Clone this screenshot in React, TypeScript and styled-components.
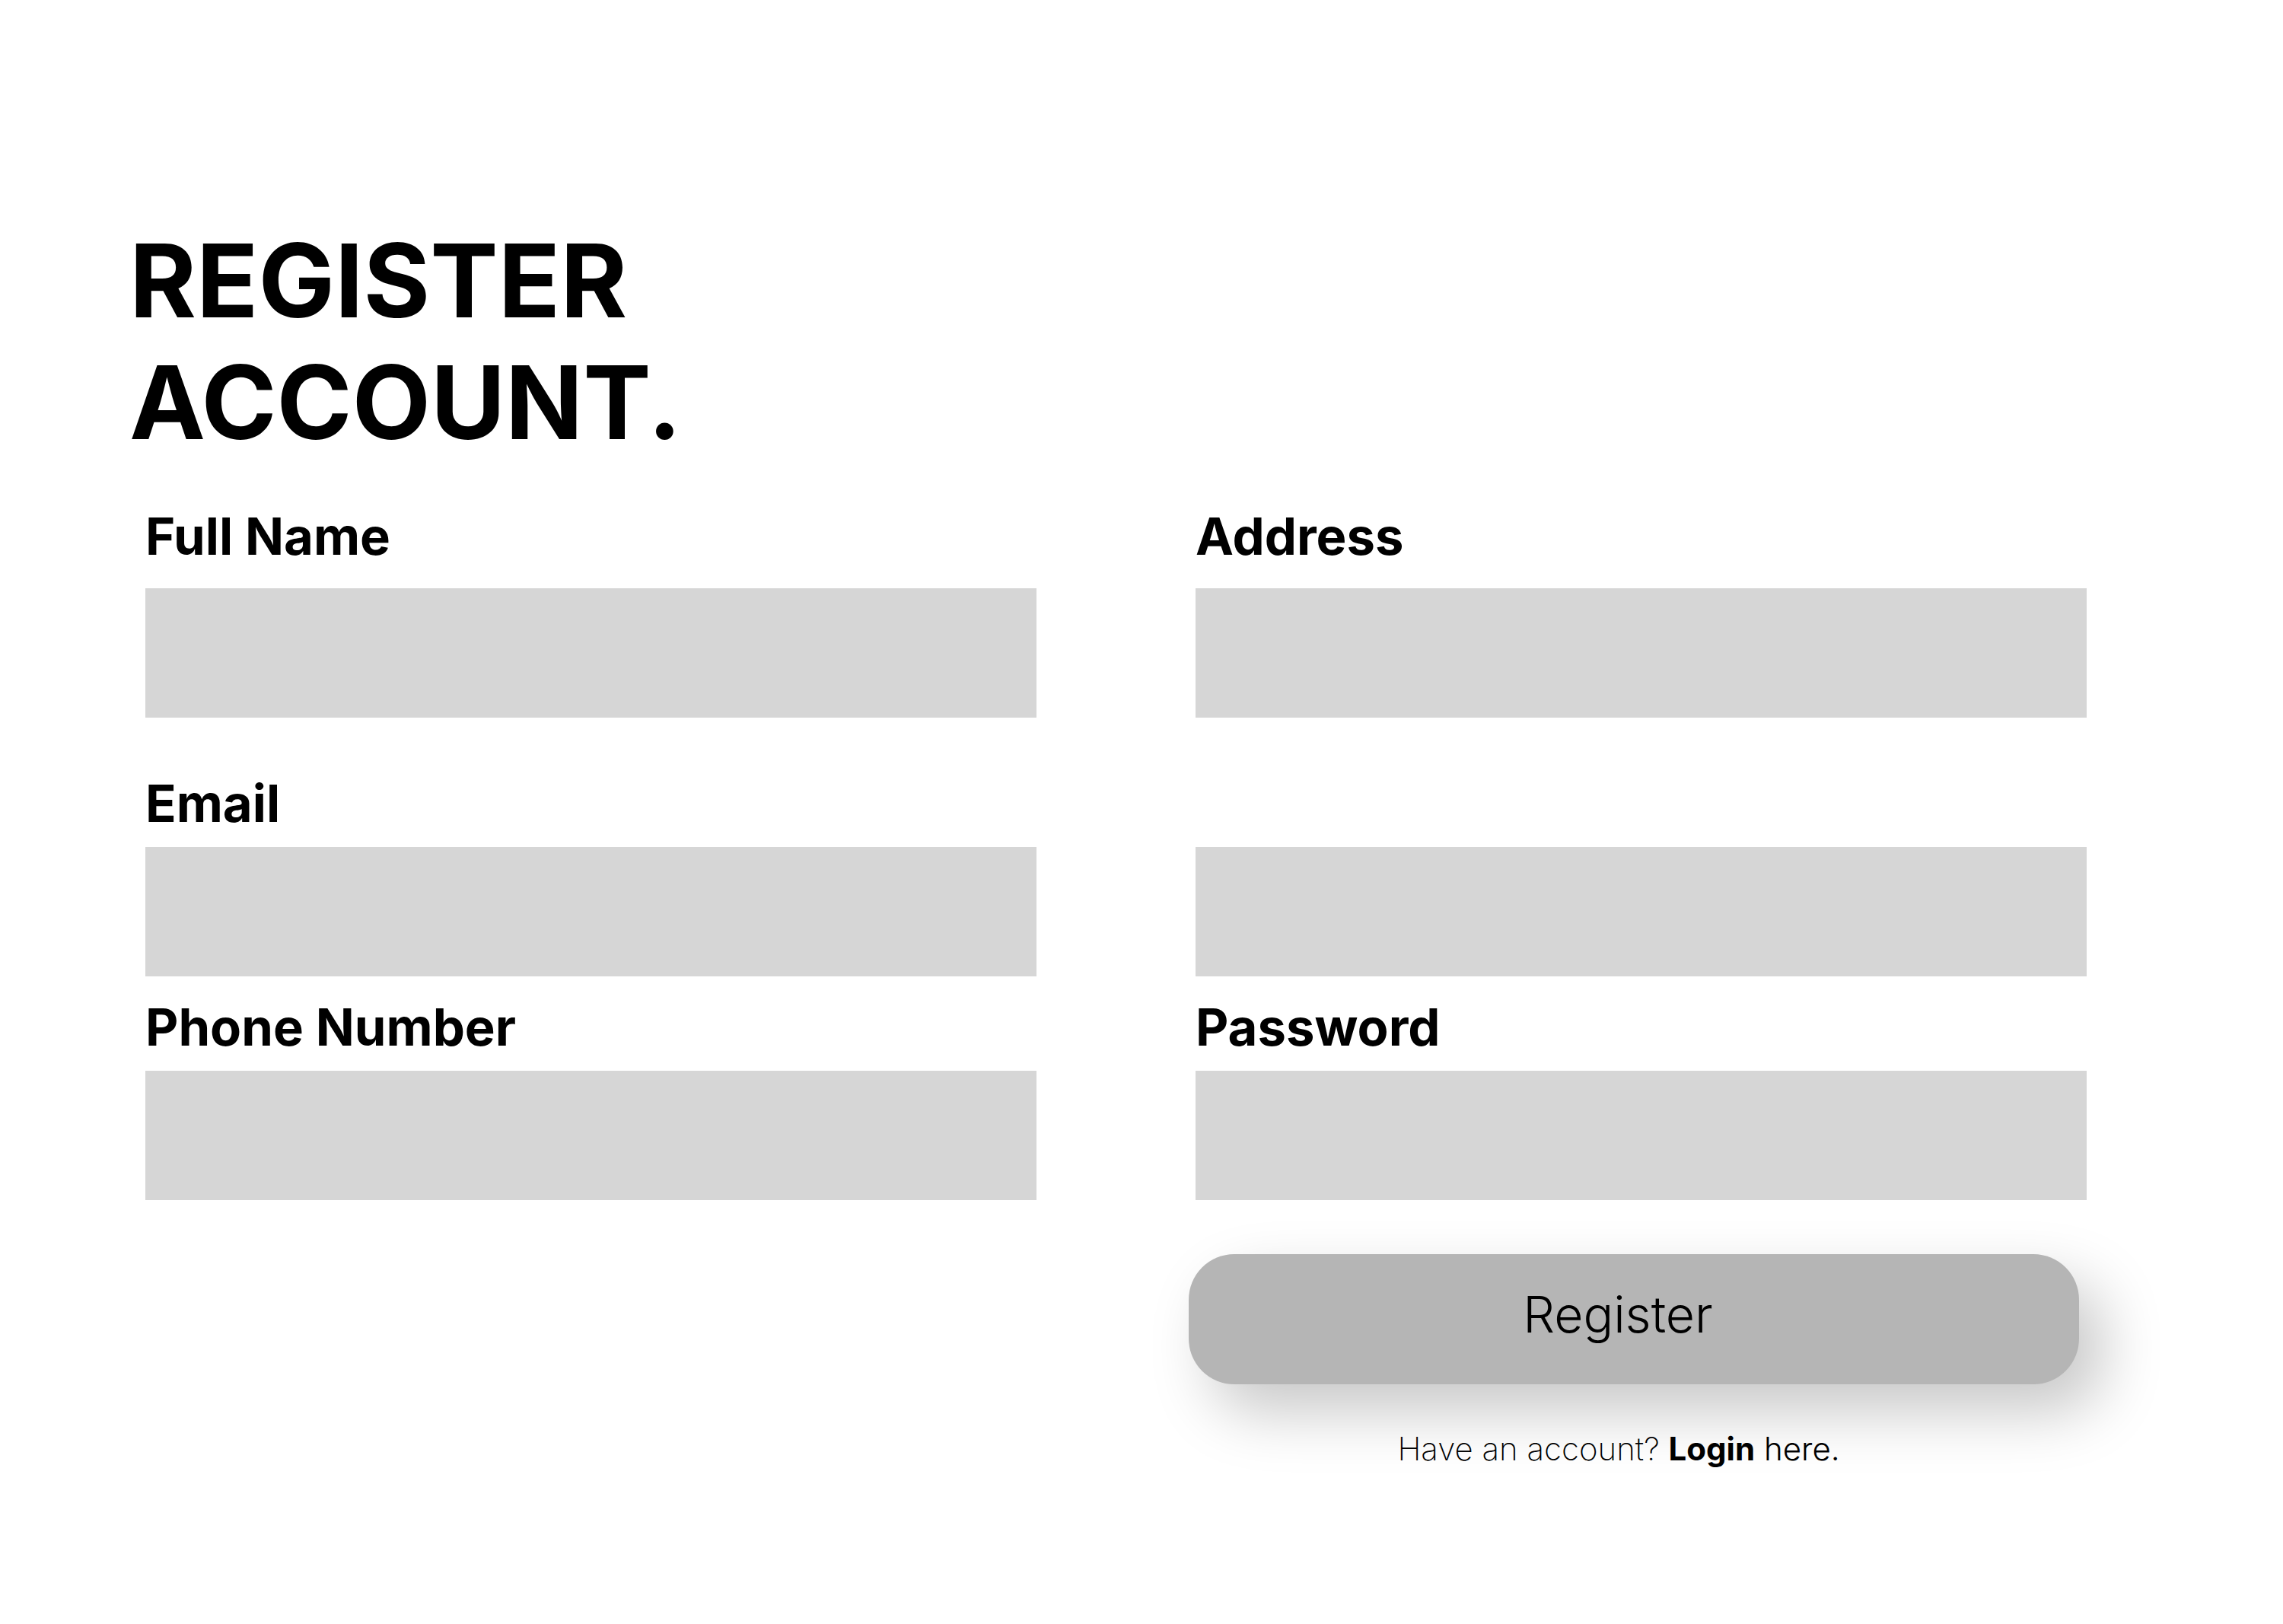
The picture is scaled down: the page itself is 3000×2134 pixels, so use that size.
import React from 'react';
import styled, { createGlobalStyle } from 'styled-components';

const GlobalStyle = createGlobalStyle`
  html, body {
    margin: 0;
    padding: 0;
    background: #ffffff;
  }

  body {
    font-family: Inter, "Noto Sans", sans-serif;
    color: #000000;
  }

  * {
    box-sizing: border-box;
  }
`;

const Page = styled.div`
  width: 3000px;
  min-height: 2134px;
  padding: 288px 0 0 170px;
  background: #ffffff;
  overflow: hidden;
`;

const Title = styled.h1`
  margin: 0;
  font-family: Inter, sans-serif;
  font-size: 134px;
  font-weight: 700;
  line-height: 160px;
  color: #000000;
`;

const Form = styled.form`
  display: grid;
  grid-template-columns: 1171px 1171px;
  column-gap: 209px;
  margin: 57px 0 0 21px;
`;

const Column = styled.div`
  display: flex;
  flex-direction: column;
`;

const Field = styled.div<{ $top: number }>`
  display: flex;
  flex-direction: column;
  margin-top: ${p => p.$top}px;
`;

const Label = styled.label<{ $gap: number }>`
  display: block;
  min-height: 80px;
  margin-bottom: ${p => p.$gap}px;
  font-family: Inter, sans-serif;
  font-size: 67px;
  font-weight: 700;
  line-height: 80px;
  color: #000000;
`;

const Input = styled.input`
  display: block;
  width: 100%;
  height: 170px;
  border: none;
  outline: none;
  margin: 0;
  padding: 0 30px;
  background: #d6d6d6;
  font-family: Inter, sans-serif;
  font-size: 48px;
`;

const RegisterButton = styled.button`
  display: flex;
  align-items: center;
  justify-content: center;
  width: 1170px;
  height: 171px;
  margin: 71px 0 0 -9px;
  padding: 0 42px 14px 0;
  border: none;
  border-radius: 60px;
  background: #b5b5b5;
  box-shadow: 30px 36px 80px rgba(0, 0, 0, 0.22);
  font-family: Inter, sans-serif;
  font-size: 66px;
  font-weight: 300;
  color: #000000;
  cursor: pointer;
`;

const LoginNote = styled.p`
  width: 1170px;
  margin: 60px 0 0 -9px;
  padding-right: 40px;
  text-align: center;
  font-family: Inter, sans-serif;
  font-size: 42px;
  font-weight: 200;
  line-height: 50px;
  color: #000000;
`;

const LoginLink = styled.a`
  font-weight: 700;
  color: #000000;
  text-decoration: none;
  cursor: pointer;
`;

const Here = styled.span`
  font-weight: 300;
`;

type FieldDef = { label: string; type: string; top: number; gap: number };

const leftFields: FieldDef[] = [
  { label: 'Full Name', type: 'text', top: 0, gap: 28 },
  { label: 'Email', type: 'email', top: 73, gap: 17 },
  { label: 'Phone Number', type: 'tel', top: 27, gap: 17 },
];

const rightFields: FieldDef[] = [
  { label: 'Address', type: 'text', top: 0, gap: 28 },
  { label: '', type: 'text', top: 73, gap: 17 },
  { label: 'Password', type: 'password', top: 27, gap: 17 },
];

const renderField = (f: FieldDef, i: number) => (
  <Field key={i} $top={f.top}>
    <Label $gap={f.gap}>{f.label}</Label>
    <Input type={f.type} aria-label={f.label || 'extra'} />
  </Field>
);

const App: React.FC = () => {
  return (
    <>
      <GlobalStyle />
      <Page>
        <Title>
          REGISTER
          <br />
          ACCOUNT.
        </Title>
        <Form onSubmit={e => e.preventDefault()}>
          <Column>{leftFields.map(renderField)}</Column>
          <Column>
            {rightFields.map(renderField)}
            <RegisterButton type="submit">Register</RegisterButton>
            <LoginNote>
              Have an account? <LoginLink>Login</LoginLink> <Here>here.</Here>
            </LoginNote>
          </Column>
        </Form>
      </Page>
    </>
  );
};

export default App;
